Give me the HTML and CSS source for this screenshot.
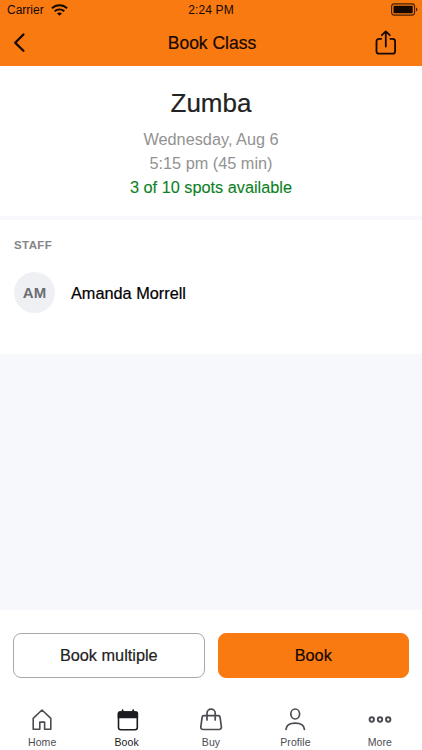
FILE: index.html
```html
<!DOCTYPE html>
<html lang="en">
<head>
<meta charset="UTF-8">
<meta name="viewport" content="width=device-width, initial-scale=1.0">
<title>Book Class</title>
<link rel="stylesheet" href="styles.css">
</head>
<body>

<header class="header">
  <div class="status-bar">
    <div class="carrier">
      <span>Carrier</span>
      <svg width="17" height="12" viewBox="0 0 17 12" fill="none" stroke="currentColor" stroke-width="1.9">
        <path d="M.9 4.300C5.100.2 11.900.2 16.100 4.300"/>
        <path d="M3.700 7.200c2.600-2.500 7-2.500 9.600 0"/>
        <path d="M8.500 11.800 6 9.500c1.400-1.200 3.600-1.200 5 0z" fill="currentColor" stroke="none"/>
      </svg>
    </div>
    <div class="time">2:24 PM</div>
    <div class="battery">
      <svg width="27" height="13" viewBox="0 0 27 13">
        <rect x=".6" y=".9" width="23" height="11.200" rx="2.800" fill="none" stroke="currentColor" stroke-width="1.100" opacity=".8"/>
        <rect x="2.500" y="2.700" width="19.200" height="7.600" rx="1" fill="currentColor"/>
        <path d="M25 4.500c1.900.8 1.900 3.200 0 4z" fill="currentColor" opacity=".8"/>
      </svg>
    </div>
  </div>
  <div class="title-bar">
    <svg class="back" width="12" height="20" viewBox="0 0 12 20" fill="none" stroke="currentColor" stroke-width="2.300" stroke-linecap="round" stroke-linejoin="round">
      <path d="M10.400 1.500 2.200 9.800l8.200 8"/>
    </svg>
    <h1>Book Class</h1>
    <svg class="share" width="22" height="26" viewBox="0 0 22 26" fill="none" stroke="currentColor" stroke-width="1.800" stroke-linecap="round" stroke-linejoin="round">
      <path d="M6.200 8.800H4a2.500 2.500 0 0 0-2.500 2.500v9.900A2.500 2.500 0 0 0 4 23.700h13.600a2.500 2.500 0 0 0 2.500-2.500v-9.900a2.500 2.500 0 0 0-2.500-2.500h-2.200"/>
      <path d="M10.800 16.500V1.600M6.800 5.200l4-3.800 4 3.800"/>
    </svg>
  </div>
</header>

<main class="content">
  <section class="class-info">
    <h2>Zumba</h2>
    <p>Wednesday, Aug 6</p>
    <p>5:15 pm (45 min)</p>
    <p class="spots">3 of 10 spots available</p>
  </section>

  <section class="staff">
    <h3>STAFF</h3>
    <div class="staff-row">
      <div class="avatar">AM</div>
      <div class="staff-name">Amanda Morrell</div>
    </div>
  </section>
</main>

<div class="actions">
  <button class="btn">Book multiple</button>
  <button class="btn primary">Book</button>
</div>

<nav class="tabs">
  <a class="tab">
    <svg width="26" height="26" viewBox="0 0 26 26" fill="none" stroke="currentColor" stroke-width="1.600" stroke-linejoin="round">
      <path d="M4.200 12.300 13 4l8.800 8.300v11h-6.200v-7.200h-4.800v7.200H4.200z"/>
    </svg>
    <span>Home</span>
  </a>
  <a class="tab active">
    <svg width="26" height="26" viewBox="0 0 26 26" fill="none" stroke="currentColor" stroke-width="1.600">
      <rect x="4.500" y="6" width="18.800" height="17.800" rx="2.200"/>
      <path d="M3.700 12.300V7.300a2.100 2.100 0 0 1 2.100-2.100H22a2.100 2.100 0 0 1 2.100 2.100v5z" fill="currentColor" stroke="none"/>
      <path d="M8.600 4.200v2M19.200 4.200v2" stroke-width="1.800" stroke-linecap="round"/>
    </svg>
    <span>Book</span>
  </a>
  <a class="tab">
    <svg width="26" height="26" viewBox="0 0 26 26" fill="none" stroke="currentColor" stroke-width="1.700" stroke-linecap="round" stroke-linejoin="round">
      <path d="M6 9.700h14.200a1.900 1.900 0 0 1 1.900 1.600l1.300 9.700a2.200 2.200 0 0 1-2.200 2.500H5a2.200 2.200 0 0 1-2.200-2.500l1.300-9.700A1.900 1.900 0 0 1 6 9.700z"/>
      <path d="M9 14V7.200a4.100 4.100 0 0 1 8.200 0V14"/>
    </svg>
    <span>Buy</span>
  </a>
  <a class="tab">
    <svg width="26" height="26" viewBox="0 0 26 26" fill="none" stroke="currentColor" stroke-width="1.700" stroke-linecap="round">
      <ellipse cx="13.200" cy="8" rx="4.400" ry="5"/>
      <path d="M4 23.400c.4-4.300 3.400-6.200 9.200-6.200s8.800 1.900 9.200 6.200"/>
    </svg>
    <span>Profile</span>
  </a>
  <a class="tab">
    <svg width="26" height="26" viewBox="0 0 26 26" fill="none" stroke="currentColor" stroke-width="1.900">
      <circle cx="4.800" cy="13.500" r="2.200"/>
      <circle cx="13" cy="13.500" r="2.200"/>
      <circle cx="21.200" cy="13.500" r="2.200"/>
    </svg>
    <span>More</span>
  </a>
</nav>

</body>
</html>
```

FILE: styles.css
```css
* {
  box-sizing: border-box;
}

body {
  margin: 0;
  height: 750px;
  display: flex;
  flex-direction: column;
  font-family: "Liberation Sans", Arial, sans-serif;
  background: #fff;
  color: #000;
}

h1, h2, h3, p {
  margin: 0;
  font-weight: normal;
}

svg {
  display: block;
}

.header {
  height: 66px;
  background: #fa7a12;
  color: #140800;
}

/* Carrier, clock and battery */
.status-bar {
  height: 19px;
  display: grid;
  grid-template-columns: 1fr auto 1fr;
  align-items: center;
  padding: 0 4px;
  font-size: 12px;
}

.carrier {
  display: flex;
  align-items: center;
  gap: 7px;
  padding-left: 3px;
}

.time {
  letter-spacing: 0.15px;
}

.battery {
  justify-self: end;
}

.title-bar {
  height: 47px;
  display: grid;
  grid-template-columns: 1fr auto 1fr;
  align-items: center;
  padding: 0 25px 0 13px;
}

.title-bar h1 {
  font-size: 17.5px;
  padding: 2px 0 0 14px;
  -webkit-text-stroke: 0.2px;
}

.share {
  justify-self: end;
}

.content {
  flex: 1;
  background: #f7f8fb;
}

.class-info {
  height: 150px;
  padding-top: 21px;
  background: #fff;
  text-align: center;
}

.class-info h2 {
  font-size: 26px;
  line-height: 32px;
  margin-bottom: 8px;
  color: #222;
  -webkit-text-stroke: 0.2px;
}

.class-info p {
  font-size: 16.3px;
  line-height: 24px;
  color: #929292;
}

.class-info .spots {
  color: #0b7f24;
  -webkit-text-stroke: 0.1px;
}

.staff {
  height: 134px;
  margin-top: 4px;
  padding: 18px 14px;
  background: #fff;
}

.staff h3 {
  font-size: 11.5px;
  line-height: 14px;
  font-weight: bold;
  letter-spacing: 0.4px;
  color: #858585;
}

.staff-row {
  display: flex;
  align-items: center;
  gap: 16px;
  margin-top: 20px;
}

.avatar {
  width: 41px;
  height: 41px;
  border-radius: 50%;
  display: flex;
  align-items: center;
  justify-content: center;
  background: #eff0f3;
  color: #6b6d74;
  font-size: 15px;
  font-weight: bold;
}

.staff-name {
  font-size: 16.3px;
  padding-top: 1px;
  -webkit-text-stroke: 0.2px;
}

.actions {
  height: 90px;
  display: flex;
  gap: 13px;
  padding: 23px 13px;
}

.btn {
  flex: 1;
  height: 45px;
  padding: 0;
  border: 1px solid #a9a9a9;
  border-radius: 8px;
  background: #fff;
  color: #222;
  font-family: inherit;
  font-size: 16.3px;
  -webkit-text-stroke: 0.2px;
}

.btn.primary {
  border-color: #fa7a12;
  background: #fa7a12;
  color: #140800;
}

/* Bottom tab bar */
.tabs {
  height: 50px;
  display: flex;
}

.tab {
  flex: 1;
  display: flex;
  flex-direction: column;
  align-items: center;
  padding-top: 6px;
  font-size: 10.5px;
  line-height: 14px;
  letter-spacing: 0.1px;
  color: #4b4b51;
}

.tab span {
  margin-top: 3px;
}

.tab.active {
  color: #1c1c20;
}
```
